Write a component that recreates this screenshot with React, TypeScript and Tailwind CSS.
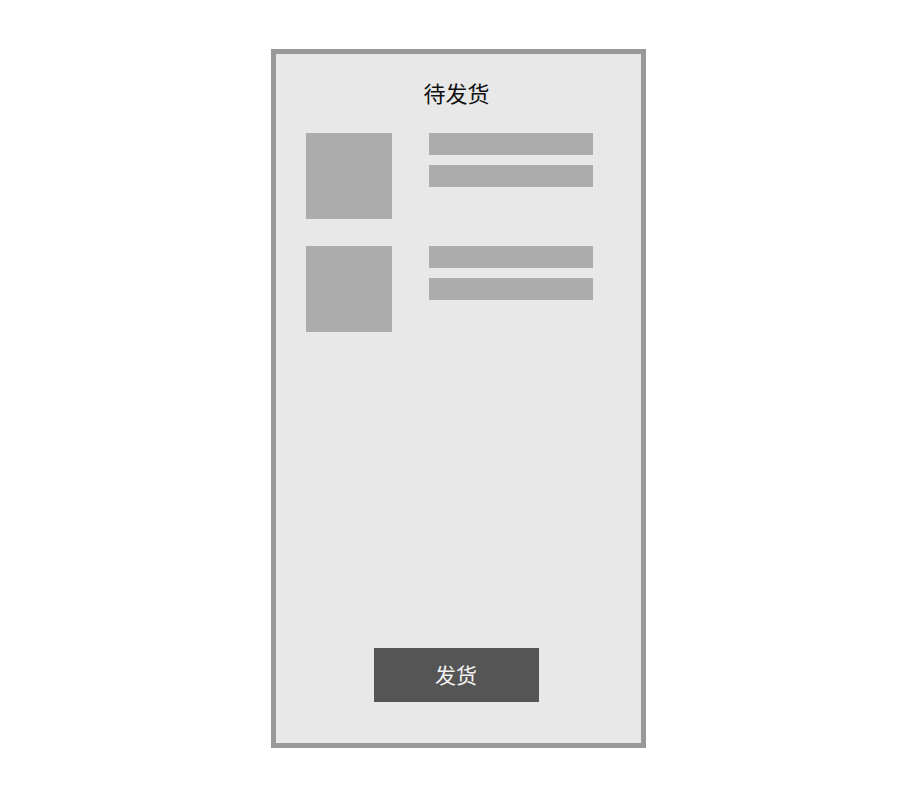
export default function App() {
  const rows = [0, 1];
  return (
    <div className="min-h-[800px] w-[915px] bg-white pt-[49px]" style={{ fontFamily: '"Noto Sans CJK SC", "Noto Sans", sans-serif' }}>
      <div className="ml-[271px] flex h-[699px] w-[375px] flex-col border-[5px] border-[#999999] bg-[#e8e8e8]">
        <div className="pt-[24px] text-center text-[22px] leading-[28px] text-[#111111] ml-[-4px]">待发货</div>
        <div className="mt-[27px] flex flex-col gap-[27px] pl-[30px]">
          {rows.map((r) => (
            <div key={r} className="flex">
              <div className="h-[86px] w-[86px] bg-[#acacac]" />
              <div className="ml-[37px] flex flex-col gap-[10px]">
                <div className="h-[22px] w-[164px] bg-[#acacac]" />
                <div className="h-[22px] w-[164px] bg-[#acacac]" />
              </div>
            </div>
          ))}
        </div>
        <div className="mt-auto mb-[41px] flex justify-center">
          <button className="ml-[-5px] flex h-[54px] w-[165px] items-center justify-center bg-[#555555] text-[21px] text-[#f2f2f2]">
            发货
          </button>
        </div>
      </div>
    </div>
  );
}
